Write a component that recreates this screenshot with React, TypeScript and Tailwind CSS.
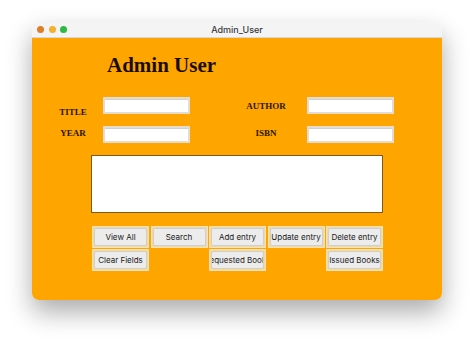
import React from 'react';

const serif = { fontFamily: '"Liberation Serif", "DejaVu Serif", serif' };
const sans = { fontFamily: 'Inter, "Liberation Sans", Arial, sans-serif' };

const Field: React.FC = () => (
  <div className="w-[87px] h-[17px] bg-white border-2 border-[#e4dcd0] shadow-[inset_0_1px_0_#d0d0d0]" />
);

const Btn: React.FC<{ label?: string }> = ({ label }) =>
  label ? (
    <div className="h-[22px] p-px border border-[#f3e2bd] bg-[#f6d99a]">
      <div
        className="h-full flex items-center justify-center overflow-hidden whitespace-nowrap bg-[#ececec] border border-[#cfcfcf] rounded-[2px] text-[8px] text-[#1a1a1a]"
        style={sans}
      >
        {label}
      </div>
    </div>
  ) : (
    <div />
  );

export default function App() {
  return (
    <div className="w-[474px] h-[344px] bg-white pt-[22px] pl-[32px]">
      <div className="w-[410px] rounded-[7px] shadow-[0_12px_26px_rgba(0,0,0,0.33)] overflow-hidden">
        {/* title bar */}
        <div className="relative h-[16px] bg-[#f4f4f4] border-b border-[#d8d8d8] flex items-center justify-center">
          <div className="absolute left-[5px] top-[4px] flex gap-[4.5px]">
            <span className="w-[7px] h-[7px] rounded-full bg-[#dc7f28]" />
            <span className="w-[7px] h-[7px] rounded-full bg-[#f2b22e]" />
            <span className="w-[7px] h-[7px] rounded-full bg-[#2dbb43]" />
          </div>
          <span className="text-[9px] font-medium text-[#3a3a3a]" style={sans}>
            Admin_User
          </span>
        </div>

        {/* body */}
        <div className="h-[262px] bg-[#ffa500] flex flex-col">
          <h1
            className="ml-[75px] mt-[14px] h-[26px] text-[21px] font-bold leading-[26px] text-[#1a0d00]"
            style={serif}
          >
            Admin User
          </h1>

          <div className="mt-[19px] flex items-start">
            <div className="ml-[18px] w-[46px] text-center text-[9px] font-bold text-[#2b1600] mt-[9px]" style={serif}>
              TITLE
            </div>
            <div className="ml-[7px]">
              <Field />
            </div>
            <div className="ml-[36px] w-[80px] text-center text-[9px] font-bold text-[#2b1600] mt-[3px]" style={serif}>
              AUTHOR
            </div>
            <div className="ml-px">
              <Field />
            </div>
          </div>

          <div className="mt-[6px] flex items-center">
            <div className="ml-[18px] w-[46px] text-center text-[9px] font-bold text-[#2b1600]" style={serif}>
              YEAR
            </div>
            <div className="ml-[7px]">
              <Field />
            </div>
            <div className="ml-[36px] w-[80px] text-center text-[9px] font-bold text-[#2b1600]" style={serif}>
              ISBN
            </div>
            <div className="ml-px">
              <Field />
            </div>
          </div>

          <div className="ml-[59px] mt-[12px] w-[292px] h-[58px] bg-white border border-[#7d5a1c]" />

          <div className="ml-[60px] mt-[13px] w-[291px] grid grid-cols-5 gap-x-[1.5px] gap-y-px">
            <Btn label="View All" />
            <Btn label="Search" />
            <Btn label="Add entry" />
            <Btn label="Update entry" />
            <Btn label="Delete entry" />
            <Btn label="Clear Fields" />
            <Btn />
            <Btn label="Requested Books" />
            <Btn />
            <Btn label="Issued Books" />
          </div>
        </div>
      </div>
    </div>
  );
}
